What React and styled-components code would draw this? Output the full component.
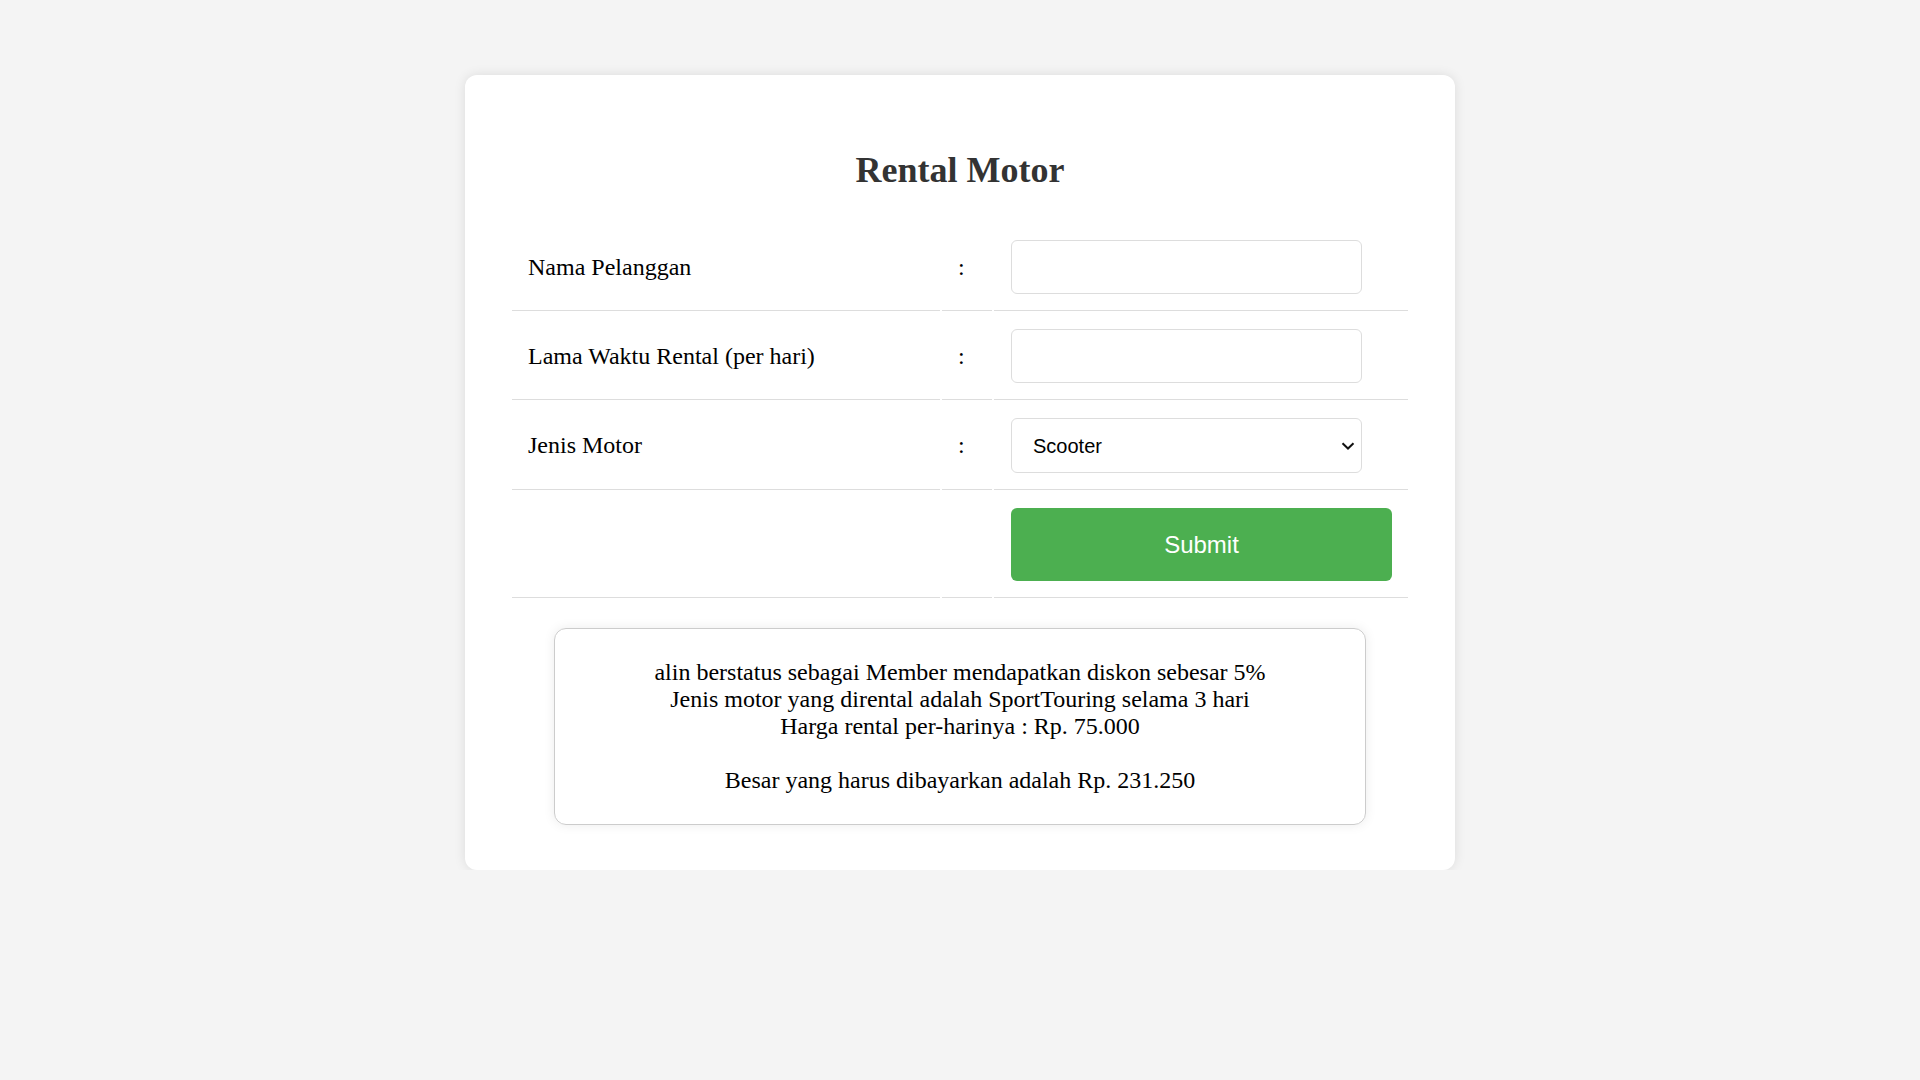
import React, { useState } from "react";
import styled, { createGlobalStyle } from "styled-components";

const GlobalStyle = createGlobalStyle`
  body {
    margin: 0;
    background: #f4f4f4;
    font-family: "Liberation Serif", "Times New Roman", serif;
    color: #000;
  }
`;

const Container = styled.div`
  width: 900px;
  margin: 75px auto 0;
  padding: 45px;
  background: #fff;
  border-radius: 12px;
  box-shadow: 0 0 12px rgba(0, 0, 0, 0.1);
`;

const Title = styled.h1`
  margin: 29px 0 31px;
  text-align: center;
  font-size: 36px;
  font-weight: bold;
  color: #333;
`;

const Table = styled.table`
  width: 100%;
  border-spacing: 2px;
`;

const Cell = styled.td`
  width: ${(props) => props.w};
  padding: ${(props) => (props.control ? "16px 16px 16px 17px" : "16px 15px 16px 16px")};
  border-bottom: 1px solid #ddd;
  font-size: 24px;
  vertical-align: middle;
`;

const Input = styled.input`
  display: block;
  box-sizing: border-box;
  width: 351px;
  height: 54px;
  padding: 0 18px;
  border: 1px solid #ddd;
  border-radius: 6px;
  font-family: "Liberation Sans", Arial, sans-serif;
  font-size: 20px;
  outline: none;
`;

const SelectWrap = styled.div`
  position: relative;
  width: 351px;
`;

const Select = styled.select`
  display: block;
  box-sizing: border-box;
  width: 100%;
  height: 55px;
  padding: 0 30px 0 21px;
  border: 1px solid #ddd;
  border-radius: 6px;
  background: #fff;
  color: #000;
  font-family: "Liberation Sans", Arial, sans-serif;
  font-size: 20px;
  outline: none;
  appearance: none;
  -webkit-appearance: none;
`;

const Chevron = styled.svg`
  position: absolute;
  right: 7px;
  top: 50%;
  width: 14px;
  height: 8px;
  margin-top: -4px;
  pointer-events: none;
`;

const Button = styled.button`
  display: block;
  width: 100%;
  height: 73px;
  border: none;
  border-radius: 6px;
  background: #4caf50;
  color: #fff;
  font-family: "Liberation Sans", Arial, sans-serif;
  font-size: 24px;
  cursor: pointer;
`;

const Result = styled.div`
  box-sizing: border-box;
  width: 812px;
  margin: 28px auto 0;
  padding: 30px;
  border: 1px solid #ccc;
  border-radius: 12px;
  box-shadow: 0 0 12px rgba(0, 0, 0, 0.08);
  text-align: center;
  font-size: 24px;
  line-height: 27px;
`;

const App = () => {
  const [nama, setNama] = useState("");
  const [lama, setLama] = useState("");
  const [jenis, setJenis] = useState("Scooter");

  return (
    <>
      <GlobalStyle />
      <Container>
        <Title>Rental Motor</Title>
        <form onSubmit={(e) => e.preventDefault()}>
          <Table>
            <tbody>
              <tr>
                <Cell w="397px">Nama Pelanggan</Cell>
                <Cell w="19px">:</Cell>
                <Cell control>
                  <Input value={nama} onChange={(e) => setNama(e.target.value)} />
                </Cell>
              </tr>
              <tr>
                <Cell w="397px">Lama Waktu Rental (per hari)</Cell>
                <Cell w="19px">:</Cell>
                <Cell control>
                  <Input value={lama} onChange={(e) => setLama(e.target.value)} />
                </Cell>
              </tr>
              <tr>
                <Cell w="397px">Jenis Motor</Cell>
                <Cell w="19px">:</Cell>
                <Cell control>
                  <SelectWrap>
                    <Select value={jenis} onChange={(e) => setJenis(e.target.value)}>
                      <option>Scooter</option>
                      <option>Sport</option>
                      <option>SportTouring</option>
                      <option>Cross</option>
                    </Select>
                    <Chevron viewBox="0 0 14 8">
                      <path d="M1.5 1.2 L7 6.5 L12.5 1.2" fill="none" stroke="#111" strokeWidth="2" />
                    </Chevron>
                  </SelectWrap>
                </Cell>
              </tr>
              <tr>
                <Cell w="397px"></Cell>
                <Cell w="19px"></Cell>
                <Cell control>
                  <Button type="submit">Submit</Button>
                </Cell>
              </tr>
            </tbody>
          </Table>
        </form>
        <Result>
          alin berstatus sebagai Member mendapatkan diskon sebesar 5%
          <br />
          Jenis motor yang dirental adalah SportTouring selama 3 hari
          <br />
          Harga rental per-harinya : Rp. 75.000
          <br />
          <br />
          Besar yang harus dibayarkan adalah Rp. 231.250
        </Result>
      </Container>
    </>
  );
};

export default App;
